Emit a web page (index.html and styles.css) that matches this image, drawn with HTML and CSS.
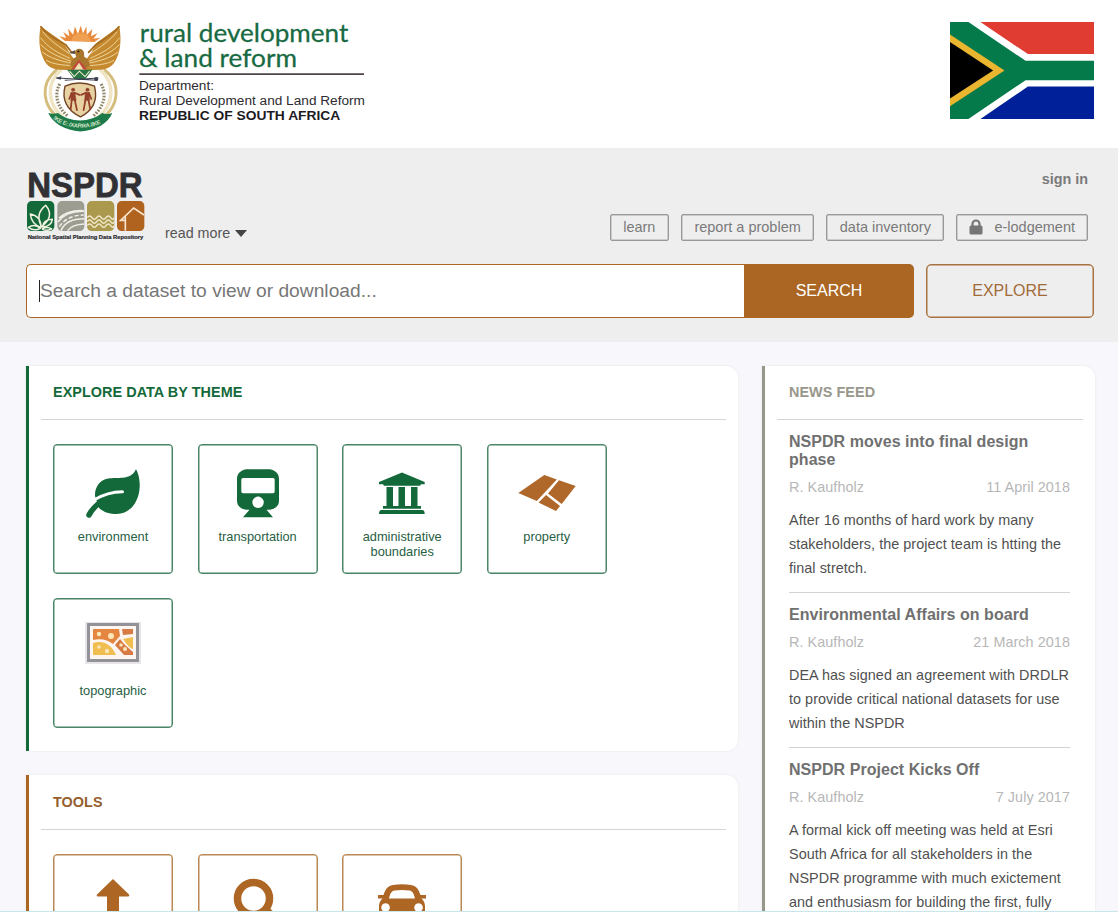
FILE: index.html
```html
<!DOCTYPE html>
<html lang="en">
<head>
<meta charset="utf-8">
<title>NSPDR</title>
<link rel="stylesheet" href="styles.css">
</head>
<body>
<header class="masthead">
  <div class="brand">
    <svg class="emblem" viewBox="0 0 300 375">
      <g transform="translate(-13.500 -1) scale(1.050 1.015)">
      <!-- rising sun -->
      <g fill="#e88b3c">
        <path d="M113 78l-17-14 20 5-8-18 17 13-3-23 14 18 5-24 9 22 8-25 6 24 10-21 1 24 16-17-4 22 19-10-12 17 20-3-17 13z"/>
        <path d="M131 78a27 23 0 0 1 55 0z" fill="#f0a050"/>
      </g>
      <!-- tusks and wheat -->
      <g fill="none" stroke-linecap="round">
        <path d="M88 164C42 203 46 270 98 307M227 164c46 39 42 106-10 143" stroke="#d5bd7d" stroke-width="8"/>
        <path d="M100 164C58 203 62 266 108 304M215 164c42 39 38 102-8 140" stroke="#efe5c4" stroke-width="10"/>
        <path d="M98 205c-17 31-8 68 22 94M216 205c17 31 8 68-22 94" stroke="#8e8767" stroke-width="9" stroke-linecap="butt" stroke-dasharray="5 4"/>
      </g>
      <!-- wings -->
      <path d="M43 34c-6 37-4 66 6 91 8 22 22 36 48 38l42 1 8-21-21-30-17-31z" fill="#c58a2f"/>
      <path d="M268 34c6 37 4 66-6 91-8 22-22 36-48 38l-42 1-6-21 21-30 17-31z" fill="#c58a2f"/>
      <g fill="none" stroke="#f3dfaa" stroke-width="2.500">
        <path d="M49 50c21 28 47 44 77 66M43 68c23 31 48 44 84 61M43 88c25 25 49 36 88 50M48 110c21 18 48 26 86 34M59 135c21 12 46 14 79 16"/>
        <path d="M262 50c-21 28-47 44-77 66M269 68c-23 31-48 44-84 61M269 88c-25 25-49 36-88 50M264 110c-21 18-48 26-86 34M253 135c-21 12-46 14-79 16"/>
      </g>
      <path d="M43 34c15 21 40 38 72 55l18 24M268 34c-15 21-40 38-67 55l-22 24" fill="none" stroke="#a66c20" stroke-width="5"/>
      <!-- secretary bird -->
      <path d="M141 112c0-15 24-15 26 0l1 13c10 4 16 14 16 27l-28 14-28-14c0-14 7-24 17-27z" fill="#a9762d"/>
      <path d="M141 105l-17 8 17 3z" fill="#564637"/>
      <circle cx="151" cy="109" r="3" fill="#291d15"/>
      <path d="M153 133l23 30h-46z" fill="#c3483c"/>
      <path d="M153 142l13 21h-27z" fill="#eee2b1"/>
      <path d="M119 163h72l-20 27h-32z" fill="#297546"/>
      <path d="M126 167l13 16 15-16 16 16 13-16" fill="none" stroke="#f5edc9" stroke-width="3"/>
      <path d="M88 187l118 7M112 194l96-7" stroke="#3d4050" stroke-width="3"/>
      <circle cx="202" cy="190" r="6" fill="#3d4050"/><path d="M86 187l17-5-3 10z" fill="#3d4050"/>
      <!-- shield -->
      <path d="M113 211q40-18 84 0c9 36 1 69-40 91-42-22-53-55-44-91z" fill="#e8d2a3" stroke="#714525" stroke-width="4"/>
      <g fill="#94402a" stroke="#94402a" stroke-linecap="round">
        <circle cx="136" cy="222" r="5"/><circle cx="177" cy="222" r="5"/>
        <path d="M130 230l11-1 4 25h-15zM171 229l12 1v24h-14z"/>
        <path d="M132 231l-7 18M140 231l14 6M132 253l-3 27M141 253l6 29M173 231l-14 6M181 231l7 18M171 253l-5 29M180 253l5 27" fill="none" stroke-width="5"/>
      </g>
      <!-- motto ribbon -->
      <path d="M65 291q14 4 28 0c33 28 90 30 126 0q14 5 29 0c-12 30-45 52-91 54-45-2-79-24-92-54z" fill="#1d7b49"/>
      <path id="motto" d="M78 308c44 33 113 37 163-2" fill="none"/>
      <text class="motto" textLength="145"><textPath href="#motto">!KE E: /XARRA //KE</textPath></text>
      </g>
    </svg>
    <svg class="department" viewBox="0 0 735 360">
      <g class="department-name">
        <text x="29" y="81" textLength="626" lengthAdjust="spacingAndGlyphs">rural development</text>
        <text x="27" y="155" textLength="474" lengthAdjust="spacingAndGlyphs">&amp; land reform</text>
      </g>
      <path d="M28 177.500h674" stroke="#51434b" stroke-width="5"/>
      <g class="department-line">
        <text x="27" y="226" textLength="225" lengthAdjust="spacingAndGlyphs">Department:</text>
        <text x="27" y="271" textLength="678" lengthAdjust="spacingAndGlyphs">Rural Development and Land Reform</text>
        <text x="27" y="316" textLength="604" lengthAdjust="spacingAndGlyphs" class="strong">REPUBLIC OF SOUTH AFRICA</text>
      </g>
    </svg>
  </div>
  <svg class="flag" viewBox="0 0 432 290">
    <path fill="#fff" d="M0 0h432v290H0z"/>
    <path fill="#e03c32" d="M91 0h341v96H233z"/>
    <path fill="#00209a" d="M233 193h199v97H91z"/>
    <path fill="#047a4b" d="M0 0h55l171 116h206v58H226L55 290H0z"/>
    <path fill="#eab52f" d="M0 37l163 108L0 252z"/>
    <path fill="#000" d="M0 60l129 85L0 229z"/>
  </svg>
</header>

<section class="hero">
  <div class="hero-top">
    <div class="intro">
      <svg class="nspdr" viewBox="33 30 360 215">
        <text class="nspdr-name" x="37" y="111" textLength="346" lengthAdjust="spacingAndGlyphs">NSPDR</text>
        <rect x="36" y="123" width="82" height="90" rx="14" fill="#14693a"/>
        <rect x="127" y="123" width="81" height="90" rx="14" fill="#9c9c90"/>
        <rect x="216" y="123" width="82" height="90" rx="14" fill="#ab994d"/>
        <rect x="306" y="123" width="82" height="90" rx="14" fill="#b0631f"/>
        <g fill="none" stroke="#f0f2df" stroke-width="4.500" stroke-linejoin="round">
          <path d="M80 200c-12-22-14-44 12-64 22 26 10 46-12 64zM78 202c-18-6-30-18-32-40 22 4 32 18 32 40zM82 201c2-14 12-22 30-23-2 16-12 22-30 23zM76 205c-13 7-24 6-36-3 13-8 25-7 36 3zM82 207c10-6 18-6 28 0-10 5-19 6-28 0z"/>
        </g>
        <g fill="none" stroke="#f0f0e9" stroke-width="4.500">
          <path d="M129 186c16-22 44-33 78-32M138 212c9-24 33-36 70-36M132 174c20-18 42-24 74-22M158 212c10-14 25-19 50-20"/>
          <path d="M133 200c16-24 39-34 73-35" stroke-dasharray="13 6"/>
        </g>
        <g fill="none" stroke="#f1e8cb" stroke-width="4.500"><path id="wave" d="M217 173q7-10 14 0t14 0t14 0t14 0t14 0t10 0"/><use href="#wave" y="12"/><use href="#wave" y="24"/></g>
        <path d="M331 212v-31h-14l39-37 31 21M331 183v-13" fill="none" stroke="#f7e4ce" stroke-width="5"/>
        <text class="nspdr-caption" x="38" y="236" textLength="347" lengthAdjust="spacingAndGlyphs">National Spatial Planning Data Repository</text>
      </svg>
      <a class="read-more">read more <span class="caret"></span></a>
    </div>
    <nav class="account">
      <a class="sign-in">sign in</a>
      <div class="links">
        <a class="link">learn</a>
        <a class="link">report a problem</a>
        <a class="link">data inventory</a>
        <a class="link lodgement"><svg class="lock" viewBox="0 0 14 16"><path d="M3.500 7V5a3.500 3.500 0 0 1 7 0v2" fill="none" stroke="#757575" stroke-width="2.200"/><rect x=".5" y="6.500" width="13" height="9" rx="1.500" fill="#757575"/></svg>e-lodgement</a>
      </div>
    </nav>
  </div>
  <div class="search">
    <div class="field"><span class="cursor"></span>Search a dataset to view or download...</div>
    <div class="search-button">SEARCH</div>
    <div class="explore-button">EXPLORE</div>
  </div>
</section>

<main class="content">
  <div class="main-column">
    <section class="panel themes">
      <h2 class="panel-title">EXPLORE DATA BY THEME</h2>
      <div class="cards">
        <div class="card">
          <svg class="icon" viewBox="0 0 60 54"><path fill="#14693a" d="M53 2.300c2.500 4 4 11 3.700 17.400C56 36 46 47 33.700 47 27 47 21 45.500 16 41L12 29c-.5-10 6-17 15-17.700 10-.8 21 1.700 26-9z"/><path d="M6 48c2-4 5-7.500 8.500-10.500" fill="none" stroke="#14693a" stroke-width="5.500" stroke-linecap="round"/><path d="M11 33c9-5.500 18-8.300 28.500-8.300" fill="none" stroke="#fff" stroke-width="3" stroke-linecap="round"/></svg>
          <span>environment</span>
        </div>
        <div class="card">
          <svg class="icon" viewBox="0 0 60 54"><path fill="#14693a" fill-rule="evenodd" d="M18 2.300h24c5.500 1 9 4.500 9 9.500v22c0 5-3.500 8-9 9h-3.500l6.500 7.500H15l6.500-7.500H18c-5.500-1-9-4-9-9v-22c0-5 3.500-8.500 9-9.500zM15 11q-1.700 0-1.700 1.700v11.900q0 1.700 1.700 1.700h30q1.700 0 1.700-1.700V12.700Q46.700 11 45 11zm15 18.600a5.700 5.700 0 1 0 .1 0z"/></svg>
          <span>transportation</span>
        </div>
        <div class="card">
          <svg class="icon" viewBox="0 0 60 54"><path fill="#14693a" d="M30 5.500l22.700 9.500v2.300H49l-1 1.500H12l-1-1.500H7V15zM14.500 20h6.500v19h5.500V20h6.500v19H39V20h6.500v19H49v2.700H11V39h3.500zM9.500 43H50q2.700 0 2.700 4H7q0-4 2.500-4z"/></svg>
          <span>administrative boundaries</span>
        </div>
        <div class="card">
          <svg class="icon" viewBox="0 0 60 54"><path fill="#b0682a" d="M27.300 8l12.500 4.500L19.800 34 1.300 26zM42 13.300l16.700 5.700-14 18L31 26.500zM29 28l14 11-4 5-17.500-8.500z"/></svg>
          <span>property</span>
        </div>
        <div class="card">
          <svg class="icon" viewBox="0 0 60 54">
            <path fill="#e7e5e8" d="M2 1h56v42H2z"/><path fill="#fcf5f2" stroke="#929298" stroke-width="3" d="M5.500 3.500h49v36h-49z"/>
            <path fill="#e58640" d="M10 8h26l1 7-7 8c-5-4-12-6-20-4z"/><path fill="#efbd50" d="M10 22c10-3 18 1 23 12H10z"/><path fill="#d87a43" d="M39 8h11v5l-10 1zM37 18l5 6 8 7v3h-9l-9-10z"/><path fill="#efbd50" d="M50 16v12c-5-2-7-6-10-10z"/>
            <g fill="#fbe6b8"><circle cx="16" cy="13" r="2.200"/><circle cx="28" cy="15" r="3"/><circle cx="16" cy="26" r="1.800"/><circle cx="24" cy="30" r="2.200"/><circle cx="38" cy="24" r="1.800"/><circle cx="42" cy="28" r="2"/></g>
          </svg>
          <span>topographic</span>
        </div>
      </div>
    </section>
    <section class="panel tools">
      <h2 class="panel-title">TOOLS</h2>
      <div class="cards">
        <div class="card"><svg class="icon" viewBox="0 0 60 54"><path fill="#ad6623" d="M30 2l16 15.500q1 2-1 2h-9V52H24V19.500h-9q-2 0-1-2z"/></svg></div>
        <div class="card"><svg class="icon" viewBox="0 0 60 54"><circle cx="25.500" cy="21.500" r="16" fill="none" stroke="#ad6623" stroke-width="7.500"/><path d="M38 33l15 15" stroke="#ad6623" stroke-width="8"/></svg></div>
        <div class="card"><svg class="icon" viewBox="0 0 60 54"><path fill="#ad6623" fill-rule="evenodd" d="M21 8q9-1.500 18 0c6 1 7.500 4.500 9.500 10H54v3.500h-4.500c2.500 2 3.500 5 3.500 8V42h-7v5h-6v-5H20v5h-6v-5H7V29.500c0-3 1-6 3.500-8H6V18h5.500c2-5.500 3.500-9 9.500-10zm1.500 5.500c-3.500.5-4.500 4-5.500 8h26c-1-4-2-7.500-5.500-8q-7.500-1-15 0zm-9 12.700a4.300 4.300 0 1 0 .1 0zm33 0a4.300 4.300 0 1 0 .1 0z"/></svg></div>
      </div>
    </section>
  </div>
  <aside class="panel news">
    <h2 class="panel-title">NEWS FEED</h2>
    <article class="article">
      <h3>NSPDR moves into final design phase</h3>
      <div class="meta"><span>R. Kaufholz</span><span>11 April 2018</span></div>
      <p>After 16 months of hard work by many stakeholders, the project team is htting the final stretch.</p>
    </article>
    <article class="article">
      <h3>Environmental Affairs on board</h3>
      <div class="meta"><span>R. Kaufholz</span><span>21 March 2018</span></div>
      <p>DEA has signed an agreement with DRDLR to provide critical national datasets for use within the NSPDR</p>
    </article>
    <article class="article">
      <h3>NSPDR Project Kicks Off</h3>
      <div class="meta"><span>R. Kaufholz</span><span>7 July 2017</span></div>
      <p>A formal kick off meeting was held at Esri South Africa for all stakeholders in the NSPDR programme with much exictement and enthusiasm for building the first, fully</p>
    </article>
  </aside>
</main>
</body>
</html>
```
FILE: styles.css
```css
* { box-sizing: border-box; }
html { overflow: hidden; }
body {
  display: flex;
  flex-direction: column;
  margin: 0;
  height: 912px;
  overflow: hidden;
  border-bottom: 1px solid #c9e6ea;
  background: #f8f7fb;
  font-family: "Liberation Sans", Arial, sans-serif;
  font-size: 14.4px;
  color: #505050;
}
h2, h3, p { margin: 0; }
svg { display: block; flex: none; }

.masthead {
  display: flex;
  flex: none;
  justify-content: space-between;
  height: 148px;
  padding: 15px 24px 0 30px;
  background: #fff;
}
.brand { display: flex; }
.emblem { width: 100px; height: 125px; }
.motto { font: bold 17px "Liberation Sans", sans-serif; fill: #d3e5c8; }
.department { width: 245px; height: 120px; }
.department-name { font: 76px Lato, sans-serif; fill: #176a42; stroke: #176a42; stroke-width: .8; }
.department-line { font: 41px "Liberation Sans", sans-serif; fill: #2e2b30; }
.strong { font-weight: bold; fill: #1d1b1f; }
.flag { width: 144.500px; height: 97px; margin-top: 7px; }

.hero { flex: none; height: 194px; padding: 22px 24px 0 26px; background: #eee; }
.hero-top { display: flex; justify-content: space-between; height: 94px; }
.intro { display: flex; gap: 19px; }
.nspdr { width: 120px; height: 71.700px; overflow: visible; }
.nspdr-name { font: bold 105px "Liberation Sans", sans-serif; fill: #303035; stroke: #303035; stroke-width: 2.500; }
.nspdr-caption { font: bold 18px "Liberation Sans", sans-serif; fill: #28282d; stroke: #28282d; stroke-width: .6; }
.read-more { display: flex; align-items: center; gap: 5px; height: 16px; margin-top: 55px; font-size: 14.300px; color: #555; }
.caret { border: 6px solid transparent; border-top: 7px solid #444; border-bottom: 0; }
.account { display: flex; flex-direction: column; align-items: flex-end; padding-right: 6px; color: #7a7a7a; }
.sign-in { height: 18px; line-height: 18px; font-weight: bold; }
.links { display: flex; gap: 12px; margin-top: 26px; }
.link { display: flex; align-items: center; height: 27px; padding: 0 12.500px 2px; border: 1.500px solid #999; border-radius: 2px; font-size: 14.500px; box-shadow: inset 0 0 0 .5px #aaa; }
.lodgement { padding: 0 12px 2px; }
.lock { width: 14px; height: 16px; margin-right: 11px; }

.search { display: flex; height: 54px; }
.field { display: flex; align-items: center; width: 718px; padding-left: 12px; background: #fff; border: 1px solid #aa6622; border-right: 0; border-radius: 5px 0 0 5px; font-size: 19.200px; letter-spacing: .02px; color: #777; }
.cursor { width: 1px; height: 22px; background: #222; }
.search-button, .explore-button { display: flex; align-items: center; justify-content: center; font-size: 16px; }
.search-button { width: 170px; background: #aa6622; border-radius: 0 5px 5px 0; color: #fff; }
.explore-button { width: 168px; margin-left: 12px; border: 1.500px solid #a87340; box-shadow: inset 0 0 0 .5px #a87340; border-radius: 5px; color: #a16b38; }

.content { display: flex; align-items: flex-start; flex: 1; min-height: 0; gap: 24px; overflow: hidden; padding: 24px 23px 0 26px; }
.main-column { display: flex; flex-direction: column; gap: 24px; width: 712px; }
.panel { background: #fff; border-left: 3px solid; border-radius: 0 12px 12px 0; box-shadow: 0 0 3px #e8e8eb; }
.themes { height: 385px; padding: 0 12px; border-color: #14693a; }
.tools { height: 387px; padding: 0 12px; border-color: #aa6622; }
.news { width: 333px; height: 620px; padding: 0 12px; border-color: #98978b; }
.panel-title { height: 54px; padding-left: 12px; border-bottom: 1px solid #d5d5d5; font-size: 14.400px; letter-spacing: .06px; line-height: 53px; }
.themes .panel-title { color: #14693a; }
.tools .panel-title { height: 54.500px; line-height: 54px; color: #95602e; }
.news .panel-title { color: #98978b; }
.cards { display: grid; grid-template-columns: repeat(4, 120px); gap: 24px 24.600px; padding: 24px 12px; }
.card { display: flex; flex-direction: column; align-items: center; height: 130px; padding-top: 20px; border: 1px solid #4a8566; border-radius: 4px; font-size: 12.800px; line-height: 15px; text-align: center; color: #276044; box-shadow: inset 0 0 0 .5px #4a8566; }
.tools .card { border-color: #b98754; box-shadow: inset 0 0 0 .5px #b98754; }
.icon { width: 60px; height: 54px; margin-top: 2px; margin-bottom: 8px; }

.article { margin: 0 13px 0 12px; padding: 12.500px 0 12px; border-bottom: 1px solid #d3d3d3; }
.article + .article { padding-top: 13px; }
.article h3 { font-size: 16px; letter-spacing: .04px; line-height: 18px; color: #707070; }
.meta { display: flex; justify-content: space-between; margin-top: 9px; font-size: 14.400px; letter-spacing: .06px; line-height: 18px; color: #b7b7b7; }
.article p { margin-right: -8px; margin-top: 12px; font-size: 14.400px; letter-spacing: .04px; line-height: 24px; }
```
